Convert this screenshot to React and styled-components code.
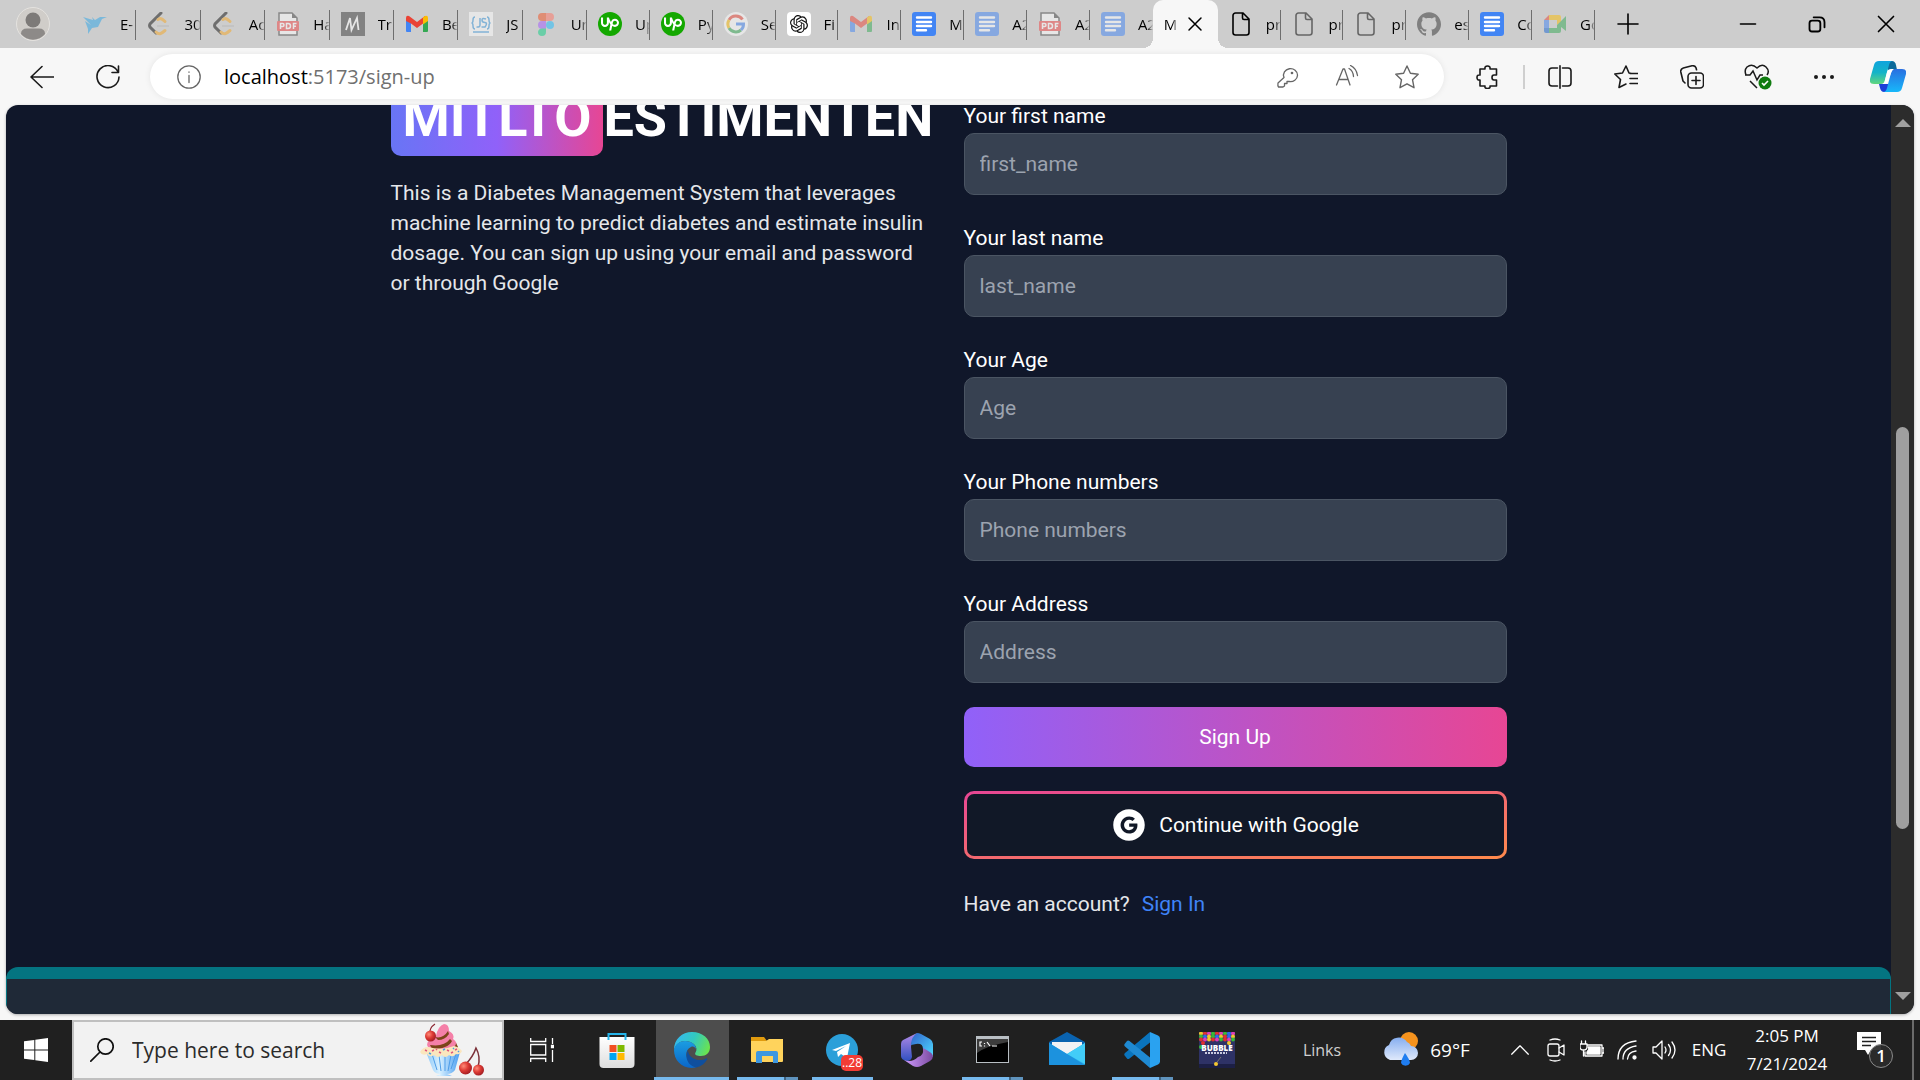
import React from "react";
import styled, { createGlobalStyle, css } from "styled-components";
import { AiFillGoogleCircle } from "react-icons/ai";
import { SiUpwork, SiOpenai, SiGithub } from "react-icons/si";

const uiFont = '"Segoe UI", "Open Sans", "Noto Sans", sans-serif';
const pageFont = 'Roboto, "Noto Sans", sans-serif';

const GlobalStyle = createGlobalStyle`
  *, *::before, *::after { box-sizing: border-box; }
  body { margin: 0; background: #f7f7f7; }
  button, input { font: inherit; color: inherit; border: 0; margin: 0; padding: 0; background: none; }
  h1, p { margin: 0; }
  svg { display: block; flex: none; }
`;

const Desktop = styled.div`
  height: 100vh;
  display: flex;
  flex-direction: column;
  overflow: hidden;
  font-family: ${uiFont};
  color: #000;
`;

/* ---------- tab strip ---------- */

const TabStrip = styled.header`
  display: flex;
  height: 48px;
  background: #cdcdcd;
`;

const Profile = styled.button`
  flex: none;
  width: 72px;
  padding: 0 0 0 16px;
`;

const TabGroup = styled.div`
  display: flex;
  flex: 0 1 ${(p) => p.$width}px;
  min-width: 0;
`;

const Tab = styled.button`
  position: relative;
  flex: 1 1 0;
  min-width: 0;
  height: 48px;
  display: flex;
  align-items: center;
  gap: 13px;
  padding-left: 11px;
  font-size: 15px;
  line-height: 24px;
  text-align: left;

  &::after {
    content: "";
    position: absolute;
    right: 0;
    top: 10px;
    width: ${(p) => (p.$last ? 0 : 1)}px;
    height: 30px;
    background: #6e6e6e;
  }

  svg { opacity: ${(p) => (p.$asleep ? 0.5 : 1)}; }
  svg svg { opacity: 1; }
`;

const TabTitle = styled.span`
  flex: 1;
  min-width: 0;
  overflow: hidden;
  white-space: nowrap;
  mask-image: linear-gradient(90deg, #000 60%, transparent);
`;

const ActiveTab = styled.div`
  position: relative;
  flex: 0 0 65px;
  display: flex;
  align-items: center;
  gap: 8px;
  padding: 0 14px 0 11px;
  font-size: 15px;
  line-height: 24px;
  background: #f7f7f7;
  border-radius: 10px 10px 0 0;

  &::before, &::after {
    content: "";
    position: absolute;
    bottom: 0;
    width: 10px;
    height: 10px;
  }
  &::before { left: -10px; background: radial-gradient(circle at 0 0, transparent 10px, #f7f7f7 10px); }
  &::after { right: -10px; background: radial-gradient(circle at 100% 0, transparent 10px, #f7f7f7 10px); }
`;

const IconButton = styled.button`
  flex: none;
  width: ${(p) => p.$width || 66}px;
  display: flex;
  align-items: center;
  justify-content: center;
`;

const WindowControls = styled.div`
  margin-left: auto;
  display: flex;
`;

/* ---------- toolbar ---------- */

const Toolbar = styled.nav`
  display: flex;
  align-items: stretch;
  height: 57px;
  padding: 6px 1px 6px 9px;
  background: #f7f7f7;
`;

const AddressBar = styled.div`
  flex: 1;
  display: flex;
  align-items: stretch;
  margin: 0 11px 0 9px;
  padding: 0 7px 0 9px;
  border-radius: 23px;
  background: #fff;
  box-shadow: 0 0 6px rgba(0, 0, 0, 0.08);
`;

const Url = styled.div`
  flex: 1;
  align-self: center;
  padding-left: 5px;
  font-size: 20px;
  line-height: 30px;
  color: #707070;
`;

const UrlHost = styled.span`
  color: #000;
`;

const ToolbarDivider = styled.span`
  align-self: center;
  width: 2px;
  height: 24px;
  margin: 0 2px;
  background: #cfcfcf;
`;

/* ---------- web page ---------- */

const Viewport = styled.div`
  flex: 1;
  min-height: 0;
  display: flex;
  margin: 0 6px 6px;
  border-radius: 12px;
  overflow: hidden;
  background: #10172a;
  box-shadow: 0 1px 3px rgba(0, 0, 0, 0.3);
`;

const Scroller = styled.div`
  flex: 1;
  min-width: 0;
  display: flex;
  flex-direction: column;
  margin-top: -26px;
  font-family: ${pageFont};
  font-size: 21px;
  line-height: 30px;
  color: #e5e7eb;
`;

const SignUpPage = styled.main`
  width: 100%;
  max-width: 1116px;
  margin: 0 auto;
  padding-bottom: 48px;
  display: grid;
  grid-template-columns: 1fr 1fr;
  gap: 30px;
`;

const Brand = styled.h1`
  display: flex;
  margin-bottom: 22px;
  font-size: 54px;
  line-height: 77px;
  font-weight: 700;
  color: #fff;
`;

const BrandBadge = styled.span`
  padding: 0 12px;
  border-radius: 10px;
  background: linear-gradient(90deg, #6875f5, #9061f9 50%, #e74694);
`;

const Tagline = styled.p`
  padding-right: 8px;
`;

const Form = styled.form`
  display: flex;
  flex-direction: column;
  gap: 24px;
  padding-top: 22px;
`;

const Fields = styled.div`
  display: flex;
  flex-direction: column;
  gap: 28px;
`;

const Field = styled.div`
  display: flex;
  flex-direction: column;
  gap: 2px;
`;

const Label = styled.label`
  color: #fff;
`;

const TextInput = styled.input`
  width: 100%;
  height: 62px;
  padding: 0 15px;
  border: 1px solid #4b5563;
  border-radius: 10px;
  background: #374151;
  color: #fff;

  &::placeholder { color: #9ca3af; opacity: 1; }
`;

const SubmitButton = styled.button`
  height: 60px;
  border-radius: 10px;
  background: linear-gradient(90deg, #9061f9, #e74694);
  color: #fff;
`;

const GoogleButton = styled.button`
  height: 68px;
  display: flex;
  align-items: center;
  justify-content: center;
  gap: 12px;
  border: 3px solid transparent;
  border-radius: 10px;
  background:
    linear-gradient(#111827, #111827) padding-box,
    linear-gradient(to bottom right, #e74694, #ff8a4c) border-box;
  color: #fff;
`;

const AccountPrompt = styled.p`
  display: flex;
  gap: 12px;
  margin-top: 6px;
`;

const SignInLink = styled.a`
  color: #3f83f8;
  text-decoration: none;
`;

const PageFooter = styled.footer`
  flex: 1;
  border: 1px solid #047481;
  border-top-width: 12px;
  border-bottom: 0;
  border-radius: 12px 12px 0 0;
  background: #1f2937;
`;

const ScrollTrack = styled.div`
  width: 23px;
  display: grid;
  grid-template-rows: 36px 286fr 402fr 149fr 36px;
  justify-items: center;
  align-items: center;
  background: #2c2c2c;
`;

const ScrollThumb = styled.div`
  grid-row: 3;
  width: 13px;
  height: 100%;
  border-radius: 7px;
  background: #9f9f9f;
`;

const ScrollArrow = styled.svg`
  grid-row: ${(p) => p.$row};
  fill: #a0a0a0;
`;

/* ---------- taskbar ---------- */

const Taskbar = styled.footer`
  display: flex;
  height: 60px;
  background: #202020;
  color: #fff;
`;

const SearchBox = styled.label`
  flex: 0 0 432px;
  display: flex;
  align-items: center;
  gap: 18px;
  padding: 0 16px;
  border: 2px solid #c0c0c0;
  background: #f2f2f2;
  color: #2b2b2b;
`;

const SearchInput = styled.input`
  flex: 1;
  min-width: 0;
  font-size: 21px;
  line-height: 30px;
  outline: 0;

  &::placeholder { color: #2b2b2b; opacity: 1; }
`;

const TaskButton = styled.button`
  position: relative;
  flex: 0 0 75px;
  display: flex;
  align-items: center;
  justify-content: center;

  ${(p) => p.$focused && css`
    background: linear-gradient(90deg, transparent 2px, #4d4d4d 2px);
    box-shadow: inset 0 -3px #76b9ed;
  `}

  ${(p) => p.$running && css`
    &::after {
      content: "";
      position: absolute;
      left: 8px;
      right: 6px;
      bottom: 0;
      height: 3px;
      background: ${p.$running === "stack"
        ? "linear-gradient(90deg, #76b9ed 47px, #3f6380 47px, #3f6380 49px, #5f93bd 49px)"
        : "#76b9ed"};
    }
  `}
`;

const CountBadge = styled.span`
  position: absolute;
  left: 37px;
  top: 35px;
  padding: 0 1px;
  border-radius: 5px;
  background: #f23c34;
  font-size: 12px;
  line-height: 16px;
`;

const Tray = styled.div`
  margin-left: auto;
  display: flex;
  font-size: 17px;
  line-height: 28px;
`;

const TrayButton = styled.button`
  display: flex;
  align-items: center;
  justify-content: center;
  gap: 12px;
  width: ${(p) => p.$width}px;
  white-space: nowrap;
`;

const ToolbarLabel = styled(TrayButton)`
  font-size: 16px;
  color: #d0d0d0;
`;

const Weather = styled(TrayButton)`
  font-size: 19px;
`;

const Clock = styled(TrayButton)`
  flex-direction: column;
  gap: 0;
`;

const Notifications = styled(TrayButton)`
  border-right: 2px solid #6b6b6b;
`;

const DesktopEdge = styled.span`
  width: 6px;
`;

/* ---------- favicons ---------- */

const Fav = ({ children, box = 24 }) => (
  <svg width="24" height="24" viewBox={`0 0 ${box} ${box}`} fill="none" aria-hidden="true">{children}</svg>
);

const Bird = () => (
  <Fav>
    <path d="M0 5l10 3-1-3 3 3 5-3h7l-5 2-4 8-6 1-4 6 0-5-3-8 6 4z" fill="#2ba5e8" />
  </Fav>
);
const LeetCode = () => (
  <Fav>
    <path d="M14 1L3 12a3 3 0 0 0 0 3l6 6" stroke="#111" strokeWidth="3" strokeLinecap="round" />
    <path d="M11 7.500l2-1c2 0 3 1 5 3M9 20c3 3 5 2 9-1.500" stroke="#f5a623" strokeWidth="3" strokeLinecap="round" />
    <path d="M10 14h12" stroke="#bbb" strokeWidth="2" />
  </Fav>
);
const Pdf = () => (
  <Fav>
    <path d="M3 1h13l5 5v17H3z" fill="#fff" stroke="#444" strokeWidth="1.500" />
    <path d="M16 1v5h5z" fill="#444" />
    <rect x="1" y="9" width="22" height="10" rx="1" fill="#f04444" />
    <path d="M4.500 17v-5.500h2q1.500 0 1.500 1.500t-1.500 1.500h-2M10.500 11.500h1.500q2.500 0 2.500 2.500t-2.500 2.500h-1.500zM17.500 17v-5.500h3M17.500 14.300h2.500" stroke="#fff" strokeWidth="1.500" />
  </Fav>
);
const Mui = () => (
  <Fav>
    <path d="M0 0h24v24H0z" fill="#3a3a3a" />
    <path d="M5 18L9 6l1.500 12L16 6l1.500 12" stroke="#fff" strokeWidth="1.800" />
  </Fav>
);
const Gmail = () => (
  <Fav>
    <path d="M1 6v13q0 1 1 1h4V10z" fill="#4285f4" />
    <path d="M23 6v13q0 1-1 1h-4V10z" fill="#34a853" />
    <path d="M1 9V6q0-3 3-2l8 6 8-6v6l-8 6-6-4.500z" fill="#ea4335" />
    <path d="M18 5.500l2-1.500q3-1 3 2v3l-5 3.500z" fill="#fbbc04" />
  </Fav>
);
const JsManager = () => (
  <Fav>
    <path d="M0 0h24v24H0z" fill="#fff" />
    <path d="M6 5Q4 5 4 8t-1.500 3Q4 11 4 14t2 3M18 5q2 0 2 3t1.500 3Q20 11 20 14t-2 3M11 6v7q0 2.500-3.500 2M17 7q-4-1.500-4 1t3 2.500 0 4.500h-3.500M4 20h16" stroke="#3b9be0" strokeWidth="1.500" />
  </Fav>
);
const Figma = () => (
  <Fav>
    <path d="M4 5a4 4 0 0 1 4-4h4v8H8a4 4 0 0 1-4-4z" fill="#f24e1e" />
    <path d="M12 1h4a4 4 0 0 1 0 8h-4z" fill="#ff7262" />
    <path d="M4 13a4 4 0 0 1 4-4h4v8H8a4 4 0 0 1-4-4z" fill="#a259ff" />
    <circle cx="16" cy="13" r="4" fill="#1abcfe" />
    <path d="M4 20a4 4 0 0 1 4-3.500h4V20a4 4 0 0 1-8 0z" fill="#0acf83" />
  </Fav>
);
const Upwork = () => (
  <Fav>
    <circle cx="12" cy="12" r="12" fill="#14a800" />
    <SiUpwork x="3" y="3" size={18} color="#fff" />
  </Fav>
);
const GoogleG = () => (
  <Fav>
    <circle cx="12" cy="12" r="12" fill="#fff" />
    <path d="M18.500 7.500A8 8 0 0 0 5 8" stroke="#ea4335" strokeWidth="3" />
    <path d="M5 8a8 8 0 0 0 0 8" stroke="#fbbc05" strokeWidth="3" />
    <path d="M5 16a8 8 0 0 0 12 2" stroke="#34a853" strokeWidth="3" />
    <path d="M17 18a8 8 0 0 0 2.500-6H12" stroke="#4285f4" strokeWidth="3" />
  </Fav>
);
const ChatGpt = () => (
  <Fav>
    <rect width="24" height="24" rx="4" fill="#fff" />
    <SiOpenai x="3" y="3" size={18} color="#111" />
  </Fav>
);
const Docs = () => (
  <Fav>
    <rect width="24" height="24" rx="3" fill="#4285f4" />
    <path d="M5 5.500h14M5 10h14M5 14h14M5 18.200h9" stroke="#fff" strokeWidth="2.400" strokeLinecap="round" />
  </Fav>
);
const FileIcon = () => (
  <Fav>
    <path d="M14 1H6.500A2.500 2.500 0 0 0 4 3.500v17A2.500 2.500 0 0 0 6.500 23h11a2.500 2.500 0 0 0 2.500-2.500V7zM13.500 1.500V6q0 1.500 1.500 1.500h5" stroke="#000" strokeWidth="1.600" />
  </Fav>
);
const GitHubMark = () => (
  <SiGithub size={24} color="#333" aria-hidden="true" />
);
const Meet = () => (
  <Fav>
    <path d="M1 8l5-5v5z" fill="#ea4335" />
    <path d="M6 3h10q2 0 2 2v5l-4 3V8H6z" fill="#fbbc04" />
    <path d="M1 8h5v8H1z" fill="#4285f4" />
    <path d="M1 16h5v5H3q-2 0-2-2z" fill="#1967d2" />
    <path d="M6 16h8v-3l9-9v15l-5-4v4q0 2-2 2H6z" fill="#34a853" />
  </Fav>
);

const firstTabs = [
  ["E-", Bird, true], ["30", LeetCode, true], ["Ac", LeetCode, true], ["Ha", Pdf, true],
  ["Tr", Mui, true], ["Be", Gmail, false], ["JS", JsManager, true], ["Un", Figma, true],
];
const middleTabs = [
  ["Up", Upwork, false], ["Py", Upwork, false], ["Se", GoogleG, true], ["Fi", ChatGpt, false],
  ["In", Gmail, true], ["M", Docs, false], ["A2", Docs, true], ["A2", Pdf, true], ["A2", Docs, true],
];
const lastTabs = [
  ["pr", FileIcon, false], ["pr", FileIcon, true], ["pr", FileIcon, true],
  ["es", GitHubMark, true], ["Co", Docs, false], ["Go", Meet, true],
];

const renderTabs = (tabs, hideLast) =>
  tabs.map(([title, Icon, asleep], i) => (
    <Tab key={i} type="button" $asleep={asleep} $last={hideLast && i === tabs.length - 1}>
      <Icon />
      <TabTitle>{title}</TabTitle>
    </Tab>
  ));

/* ---------- browser glyphs ---------- */

const Line = ({ size = 24, w = 1.6, color = "#1a1a1a", children }) => (
  <svg width={size} height={size} viewBox="0 0 24 24" fill="none" stroke={color} strokeWidth={w}
    strokeLinecap="round" strokeLinejoin="round" aria-hidden="true">{children}</svg>
);

const Avatar = () => (
  <svg width="34" height="34" viewBox="0 0 34 34" aria-hidden="true">
    <circle cx="17" cy="17" r="16.500" fill="#d0cdc9" stroke="#e4e2df" />
    <circle cx="17" cy="13" r="7.500" fill="#7d7a78" />
    <path d="M5 27q0-5.500 6-5.500h12q6 0 6 5.500a15.500 15.500 0 0 1-24 0z" fill="#8d8a88" />
  </svg>
);

const Copilot = () => (
  <svg width="36" height="34" viewBox="0 0 36 34" aria-hidden="true">
    <defs>
      <linearGradient id="cp1" x1="0" y1="0" x2="0" y2="1">
        <stop offset="0" stopColor="#0fa3dd" /><stop offset=".5" stopColor="#14b4c8" /><stop offset="1" stopColor="#62d67e" />
      </linearGradient>
      <linearGradient id="cp2" x1="0" y1="0" x2="0" y2="1">
        <stop offset="0" stopColor="#2a6fe0" /><stop offset="1" stopColor="#17b8fa" />
      </linearGradient>
    </defs>
    <path d="M9 24h10l-2 8h-3q-3 0-4-4z" fill="#1b3fd8" />
    <path d="M17 1h5q3 0 4 4l1 5h-9z" fill="#0c6a9a" />
    <path d="M9 1h14q-3 0-4 4l-4 15q-1 4-4 4H4q-5 0-4-5L4 5q1-4 5-4z" fill="url(#cp1)" />
    <path d="M27 32H13q3 0 4-4l4-15q1-4 4-4h7q5 0 4 5l-4 14q-1 4-5 4z" fill="url(#cp2)" />
    <path d="M17 12q1-3 4-3h3q-2 1-3 4l-3 8q-1 3-4 3h-1q2-1 2-4z" fill="#fff" />
  </svg>
);

/* ---------- taskbar glyphs ---------- */

const IceCream = () => (
  <svg width="66" height="54" viewBox="0 0 66 54" aria-hidden="true">
    <defs>
      <linearGradient id="cup" x1="0" x2="1">
        <stop offset="0" stopColor="#8cc8f8" /><stop offset=".4" stopColor="#d8f0ff" /><stop offset="1" stopColor="#4a9df0" />
      </linearGradient>
      <radialGradient id="cherry" cx=".35" cy=".35" r=".7">
        <stop offset="0" stopColor="#ff8b78" /><stop offset=".5" stopColor="#dd3b35" /><stop offset="1" stopColor="#a01c22" />
      </radialGradient>
    </defs>
    <path d="M8 24q-3-5 4-8l4-3q2-10 8-12 5 0 5 7 6 3 4 8 5 3 3 9l-14 4z" fill="#f580a8" />
    <path d="M10 22q14 2 20-6l2 2q-4 8-20 8zM15 14q8 2 13-6l1 3q-4 6-11 6zM30 26q6-2 6-6l2 4-3 4z" fill="#7b4418" />
    <path d="M6 29h34l-5 18q-3 4-8 4l5 2H16l5-2q-6 0-8-4z" fill="url(#cup)" />
    <path d="M12 31l5 16M19 32l2 16M25 32v16M31 32l-3 16M36 31l-5 15" stroke="#4e9de8" strokeWidth="1" fill="none" />
    <path d="M0 29q3-5 8-5 14 4 26-1 5 1 8 5-2 4-6 3-3 4-7 1-4 4-7 0-4 4-8 0-4 3-7-1-5 2-7-2z" fill="#fbe6bd" />
    <path d="M5 27l2 1M12 28l2-1M19 29l2 1M27 27l2 1M35 27l2-1M16 26l1 1M31 30l2-1" stroke="#e0567e" strokeWidth="1.500" />
    <path d="M9 30l2 1M23 27l2-1M33 25l1 1M38 28l1 1" stroke="#4a9de0" strokeWidth="1.500" />
    <path d="M10 11Q9 5 15 1" stroke="#8b2530" strokeWidth="1.200" fill="none" />
    <circle cx="10.500" cy="13" r="5.500" fill="url(#cherry)" />
    <path d="M45 42q8-8 11-17 5 9 2 19" stroke="#7b3038" strokeWidth="1.500" fill="none" />
    <circle cx="45.500" cy="45" r="6.500" fill="url(#cherry)" />
    <circle cx="58.500" cy="47" r="5.500" fill="url(#cherry)" />
  </svg>
);

const Store = () => (
  <svg width="36" height="36" viewBox="0 0 36 36" aria-hidden="true">
    <defs><linearGradient id="bag" x1="0" y1="0" x2="0" y2="1"><stop offset="0" stopColor="#fff" /><stop offset="1" stopColor="#dedede" /></linearGradient></defs>
    <path d="M9.500 8V2h17v6" fill="none" stroke="#25b4ea" strokeWidth="2" />
    <path d="M.500 5h35v27q0 4-4 4h-27q-4 0-4-4z" fill="url(#bag)" />
    <path d="M9.500 8V5M26.500 8V5" stroke="#25b4ea" strokeWidth="2" />
    <path d="M10.500 13h7v7h-7z" fill="#f25022" /><path d="M18.500 13h7v7h-7z" fill="#7fba00" />
    <path d="M10.500 21h7v7h-7z" fill="#00a4ef" /><path d="M18.500 21h7v7h-7z" fill="#ffb900" />
  </svg>
);

const Edge = () => (
  <svg width="36" height="36" viewBox="0 0 36 36" aria-hidden="true">
    <defs>
      <linearGradient id="e1" x1="0" y1=".3" x2="1" y2=".6"><stop offset="0" stopColor="#35b8f0" /><stop offset=".5" stopColor="#32c9c0" /><stop offset="1" stopColor="#6be34e" /></linearGradient>
      <linearGradient id="e2" x1="0" y1="0" x2="0" y2="1"><stop offset="0" stopColor="#1b9de2" /><stop offset="1" stopColor="#0a66c8" /></linearGradient>
    </defs>
    <path d="M0 18C0 7 8 0 18 0c11 0 18 7 18 15 0 6-4 9-9 9-4 0-7-1-5.500-3.500C25 15 19 9 11 9 6 9 2 12 0 18z" fill="url(#e1)" />
    <path d="M0 18C1 12 6 9 11 9c7 0 11 4 11 8-1-2-3-3-5-2-5 2-6 8-3 13 2 4 6 6 8 7.500C9 38 0 29 0 18z" fill="url(#e2)" />
    <path d="M14 18c-4 7 0 16 8 17.500 5-1 9-4 11-8 .5-1-.3-1.500-1-1-7 4-18 0-18-8.500z" fill="#0f4f9e" />
  </svg>
);

const Folder = () => (
  <svg width="36" height="36" viewBox="0 0 36 36" aria-hidden="true">
    <path d="M2 5h13l3 4H2z" fill="#e09b0e" />
    <path d="M2 9h15l3-2h14v22q0 1-1 1H3q-1 0-1-1z" fill="#ffd35c" />
    <path d="M7 31V21q0-2 2-2h18q2 0 2 2v10h-5v-7H13v7z" fill="#3e97e0" />
  </svg>
);

const Telegram = () => (
  <svg width="34" height="34" viewBox="0 0 34 34" aria-hidden="true">
    <circle cx="17" cy="17" r="16" fill="#2b9fd9" />
    <path d="M7 17l18-7-3 15-6-4-3 3-1-5 9-6-10 5z" fill="#fff" />
  </svg>
);

const Office = () => (
  <svg width="36" height="36" viewBox="0 0 36 36" aria-hidden="true">
    <defs>
      <linearGradient id="o1" x1="0" y1="0" x2="0" y2="1"><stop offset="0" stopColor="#b48be8" /><stop offset="1" stopColor="#3050c0" /></linearGradient>
      <linearGradient id="o2" x1="0" y1="0" x2="1" y2="1"><stop offset="0" stopColor="#2f62cc" /><stop offset="1" stopColor="#50dcff" /></linearGradient>
      <linearGradient id="o3"><stop offset="0" stopColor="#d19cff" /><stop offset="1" stopColor="#7a4aa0" /></linearGradient>
    </defs>
    <path d="M18 1L4 8q-2 1-2 4v12q0 4 6 5 4 0 5-4l-1-10q0-6 6-14z" fill="url(#o1)" />
    <path d="M18 1q-6 4-6 12l5-1q7-1 7 5l10 8V12q0-3-3-5L22 2q-2-1-4-1z" fill="url(#o2)" />
    <path d="M34 24q0-3-10-8 1 8-5 9-6 6-14 3l9 6q4 2 8 0l9-5q3-2 3-5z" fill="url(#o3)" />
  </svg>
);

const Terminal = () => (
  <svg width="36" height="36" viewBox="0 0 36 36" aria-hidden="true">
    <path d="M2 4h33v27H2z" fill="#b9bfc4" /><path d="M3 7h31v23H3z" fill="#000" />
    <path d="M3 7h31v3Q12 14 3 21z" fill="#3c3c3c" />
    <path d="M8 10H6v4h2M10.500 11v1M10.500 13.500v1M13 10l3 4M18 14h5" stroke="#fff" strokeWidth="1.200" fill="none" />
  </svg>
);

const Mail = () => (
  <svg width="36" height="36" viewBox="0 0 36 36" aria-hidden="true">
    <path d="M0 10L18 0l18 10v4H0z" fill="#0a63b0" />
    <path d="M3 10h30v8L18 25 3 18z" fill="#f2f2f4" />
    <path d="M0 11l18 11L36 11v21q0 1-1 1H1q-1 0-1-1z" fill="#2cb3ee" />
    <path d="M36 11v21L18 22z" fill="#42cdf8" /><path d="M0 11l36 22H1q-1 0-1-1z" fill="#1c92de" />
  </svg>
);

const VsCode = () => (
  <svg width="36" height="36" viewBox="0 0 36 36" aria-hidden="true">
    <path d="M26 0L1 21q-1.500 1.500 0 3l2 2.500q1 1 2.500 0L26 10.500z" fill="#0a74bd" />
    <path d="M26 36L1 14.500q-1.500-1.500 0-3L3 9q1-1 2.500 0L26 25.500z" fill="#1f8ad2" />
    <path d="M26 0l8 3.500q2 1 2 3v23q0 2-2 3L26 36z" fill="#2aa2f0" />
  </svg>
);

const ballColors = ["#f2c62c", "#dd3cb8", "#2c6be8", "#e03030", "#38b838"];
const BubbleShooter = () => (
  <svg width="36" height="36" viewBox="0 0 36 36" aria-hidden="true">
    <path d="M0 0h36v36H0z" fill="#2e3266" /><path d="M0 32h36v4H0z" fill="#1c1f45" />
    {Array.from({ length: 27 }, (_, i) => (
      <circle key={i} cx={2 + (i % 9) * 4} cy={1.5 + Math.floor(i / 9) * 3} r="2" fill={ballColors[(i * 3 + Math.floor(i / 4)) % 5]} />
    ))}
    <circle cx="4" cy="11" r="2" fill="#e03030" /><circle cx="2" cy="15" r="2" fill="#38b838" /><circle cx="30" cy="11" r="2" fill="#f2c62c" />
    <text x="18" y="19" textAnchor="middle" fontSize="8" fontWeight="800" fill="#fff">BUBBLE</text>
    <path d="M6 21h22" stroke="#c9cbe0" strokeWidth="2" strokeDasharray="2 1" />
    <path d="M18 30l4-5" stroke="#777" /><circle cx="17" cy="32" r="2" fill="#f5c832" />
  </svg>
);

const WeatherIcon = () => (
  <svg width="36" height="36" viewBox="0 0 36 36" aria-hidden="true">
    <defs><linearGradient id="cl" x1="0" y1="0" x2="0" y2="1"><stop offset="0" stopColor="#86aef0" /><stop offset="1" stopColor="#dfe9fb" /></linearGradient></defs>
    <circle cx="27" cy="9" r="9" fill="#f5931e" />
    <path d="M8 28a8 8 0 0 1-1-15A10 10 0 0 1 25 10a8 8 0 0 1 4 4 7 7 0 0 1 0 14z" fill="url(#cl)" />
    <path d="M23 21q5 7 5 10a5 5 0 0 1-9 0q0-3 4-10z" fill="#1f7df0" />
  </svg>
);

const formFields = [
  ["first_name", "Your first name", "first_name", "text"],
  ["last_name", "Your last name", "last_name", "text"],
  ["age", "Your Age", "Age", "text"],
  ["phone", "Your Phone numbers", "Phone numbers", "tel"],
  ["address", "Your Address", "Address", "text"],
];

export default function App() {
  return (
    <Desktop>
      <GlobalStyle />
      <TabStrip>
        <Profile type="button" aria-label="Profile"><Avatar /></Profile>
        <TabGroup $width={515}>{renderTabs(firstTabs)}</TabGroup>
        <TabGroup $width={1008}>
          {renderTabs(middleTabs, true)}
          <ActiveTab>
            <TabTitle>M</TabTitle>
            <IconButton type="button" $width={18} aria-label="Close tab">
              <Line size={18} w={2} color="#000"><path d="M4 4l16 16M20 4L4 20" /></Line>
            </IconButton>
          </ActiveTab>
          {renderTabs(lastTabs)}
        </TabGroup>
        <IconButton type="button" aria-label="New tab">
          <Line color="#000"><path d="M12 2v20M2 12h20" /></Line>
        </IconButton>
        <WindowControls>
          <IconButton type="button" $width={69} aria-label="Minimize">
            <Line size={20} w={2} color="#000"><path d="M3 12h18" /></Line>
          </IconButton>
          <IconButton type="button" $width={69} aria-label="Restore">
            <Line size={20} w={2.2} color="#000"><rect x="3" y="8" width="13" height="13" rx="3" /><path d="M8 4h7q6 0 6 6v6" /></Line>
          </IconButton>
          <IconButton type="button" $width={69} aria-label="Close window">
            <Line size={20} w={2} color="#000"><path d="M3 3l18 18M21 3L3 21" /></Line>
          </IconButton>
        </WindowControls>
      </TabStrip>

      <Toolbar>
        <IconButton type="button" aria-label="Back"><Line><path d="M23.500 12H1M12 1.500L1 12l11 10.500" /></Line></IconButton>
        <IconButton type="button" aria-label="Refresh">
          <Line><path d="M22 7A11 11 0 1 0 23 12M22.500 1v6.500H16" /></Line>
        </IconButton>
        <AddressBar>
          <IconButton type="button" $width={60} aria-label="Site information">
            <Line color="#666" w={1.3}><circle cx="12" cy="12" r="11.200" /><path d="M12 10.500v7M12 7v.3" /></Line>
          </IconButton>
          <Url><UrlHost>localhost</UrlHost>:5173/sign-up</Url>
          <IconButton type="button" $width={60} aria-label="Saved passwords">
            <Line color="#666" w={1.3}><path d="M9 12.500a7 6.500 0 1 1 5 4l-2 0v2H9.500v2.500l-1.500 1H3.500q-1-1-.5-4z" /><circle cx="17" cy="8" r=".7" /></Line>
          </IconButton>
          <IconButton type="button" $width={60} aria-label="Read aloud">
            <Line color="#666" w={1.3}><path d="M1.500 20L8 4h1.500L15 20M4 14.500h9M14 3.500q4 2 4.500 8M15.500 0.500q6 3 7 10" /></Line>
          </IconButton>
          <IconButton type="button" $width={60} aria-label="Add to favorites">
            <Line color="#666" w={1.4}><path d="M12 1l3.400 7.200 7.800 1-5.700 5.500 1.500 8L12 18.800 5 22.700l1.500-8L.8 9.200l7.800-1z" /></Line>
          </IconButton>
        </AddressBar>
        <IconButton type="button" aria-label="Extensions">
          <Line><path d="M4 4h5q-.5-3 2.500-3T14 4h6.500v6H18q-2 0-2 2.500t2 2.500h2.500v6H14q.5 2.500-2.500 2.500T9 21H4v-6q-3 .5-3-2.500T4 10z" /></Line>
        </IconButton>
        <ToolbarDivider />
        <IconButton type="button" aria-label="Split screen">
          <Line><path d="M9.500 3H4Q1 3 1 6v12q0 3 3 3h5.500M14.500 3H20q3 0 3 3v12q0 3-3 3h-5.500M12 .8v22.400" /></Line>
        </IconButton>
        <IconButton type="button" aria-label="Favorites">
          <Line><path d="M17.500 8.500L15 8l-3-7-3.500 7L.8 9l5.700 5.500L5 22.500l7-3.500M16 8.500h7.500M16 13.500h7.500M16 18.500h7.500" /></Line>
        </IconButton>
        <IconButton type="button" aria-label="Collections">
          <Line><rect x="8" y="8" width="15.500" height="15" rx="3.500" /><path d="M16 11.500v8M12 15.500h8M5 18l-2-2L.8 7q-.5-3 2.500-4L12 .8q3-.5 4 2l.5 2" /></Line>
        </IconButton>
        <IconButton type="button" aria-label="Browser essentials">
          <svg width="28" height="26" viewBox="0 0 28 26" fill="none" aria-hidden="true">
            <path d="M2 11Q0 6 3 3q5-4 10 1 5-5 9-1 4 4 1 8M1 11h5l3-4 4 9 3-5h3M6 17l7 7" stroke="#1a1a1a" strokeWidth="1.500" />
            <circle cx="21" cy="19" r="6.500" fill="#107c10" /><path d="M18 19l2 2 4-4" stroke="#fff" strokeWidth="1.600" />
          </svg>
        </IconButton>
        <IconButton type="button" aria-label="Settings and more">
          <Line w={0}><g fill="#1a1a1a"><circle cx="4" cy="12" r="2" /><circle cx="12" cy="12" r="2" /><circle cx="20" cy="12" r="2" /></g></Line>
        </IconButton>
        <IconButton type="button" $width={62} aria-label="Copilot"><Copilot /></IconButton>
      </Toolbar>

      <Viewport>
        <Scroller>
          <SignUpPage>
            <section>
              <Brand><BrandBadge>MITLTO</BrandBadge>ESTIMENTEN</Brand>
              <Tagline>
                This is a Diabetes Management System that leverages machine learning to predict
                diabetes and estimate insulin dosage. You can sign up using your email and password
                or through Google
              </Tagline>
            </section>
            <Form onSubmit={(e) => e.preventDefault()}>
              <Fields>
                {formFields.map(([id, label, placeholder, type]) => (
                  <Field key={id}>
                    <Label htmlFor={id}>{label}</Label>
                    <TextInput id={id} type={type} placeholder={placeholder} />
                  </Field>
                ))}
              </Fields>
              <SubmitButton type="submit">Sign Up</SubmitButton>
              <GoogleButton type="button">
                <AiFillGoogleCircle size={36} />
                Continue with Google
              </GoogleButton>
              <AccountPrompt>
                Have an account? <SignInLink href="/sign-in">Sign In</SignInLink>
              </AccountPrompt>
            </Form>
          </SignUpPage>
          <PageFooter />
        </Scroller>
        <ScrollTrack>
          <ScrollArrow $row={1} width="16" height="8" viewBox="0 0 16 8"><path d="M0 8l8-8 8 8z" /></ScrollArrow>
          <ScrollThumb />
          <ScrollArrow $row={5} width="16" height="8" viewBox="0 0 16 8"><path d="M0 0h16L8 8z" /></ScrollArrow>
        </ScrollTrack>
      </Viewport>

      <Taskbar>
        <IconButton type="button" $width={72} aria-label="Start">
          <svg width="24" height="24" viewBox="0 0 24 24" fill="#fff">
            <path d="M0 3.300L10.300 2v9.500H0zM11.300 1.800L24 0v11.500H11.300zM0 12.500h10.300V22L0 20.700zM11.300 12.500H24V24l-12.700-1.800z" />
          </svg>
        </IconButton>
        <SearchBox>
          <Line color="#111" w={1.7}><circle cx="15.500" cy="8.500" r="7.700" /><path d="M10 14L.8 23.200" /></Line>
          <SearchInput type="text" placeholder="Type here to search" />
          <IceCream />
        </SearchBox>
        <TaskButton type="button" aria-label="Task view">
          <svg width="24" height="24" viewBox="0 0 24 24" fill="none" stroke="#fff" strokeWidth="1.300">
            <path d="M.7 0v3.500h15V0M.7 6.500h15v10.500h-15zM.7 24v-3.500h15V24M22.500 0v6M22.500 12v12" />
            <path d="M21.500 7.500h2v2h-2z" fill="#fff" />
          </svg>
        </TaskButton>
        <TaskButton type="button" aria-label="Microsoft Store"><Store /></TaskButton>
        <TaskButton type="button" aria-label="Edge" $focused><Edge /></TaskButton>
        <TaskButton type="button" aria-label="File Explorer" $running="stack"><Folder /></TaskButton>
        <TaskButton type="button" aria-label="Telegram" $running="single"><Telegram /><CountBadge>..28</CountBadge></TaskButton>
        <TaskButton type="button" aria-label="Microsoft 365"><Office /></TaskButton>
        <TaskButton type="button" aria-label="Command Prompt" $running="stack"><Terminal /></TaskButton>
        <TaskButton type="button" aria-label="Mail"><Mail /></TaskButton>
        <TaskButton type="button" aria-label="Visual Studio Code" $running="stack"><VsCode /></TaskButton>
        <TaskButton type="button" aria-label="Bubble Shooter"><BubbleShooter /></TaskButton>

        <Tray>
          <ToolbarLabel type="button" $width={56}>Links</ToolbarLabel>
          <Weather type="button" $width={152}><WeatherIcon />69°F</Weather>
          <TrayButton type="button" $width={36} aria-label="Show hidden icons">
            <Line size={20} color="#fff" w={1.6}><path d="M2 17L12 7l10 10" /></Line>
          </TrayButton>
          <TrayButton type="button" $width={36} aria-label="Meet Now">
            <Line color="#fff" w={1.3}><rect x="4" y="6" width="11" height="12" rx="2" /><path d="M15 10l5-3v10l-5-3M6 2q5-2 10 0M6 22q5 2 10 0" /></Line>
          </TrayButton>
          <TrayButton type="button" $width={36} aria-label="Battery">
            <Line color="#fff" w={1.3}><path d="M7 7h15v11H5v-4M22 10h2v5h-2M1.500 3v3M5.500 3v3M0 6h7v3q0 3-3.500 3T0 9zM3.500 12v6" /><path d="M8 9h12v7H7v-2l2-3z" fill="#fff" /></Line>
          </TrayButton>
          <TrayButton type="button" $width={36} aria-label="Wi-Fi">
            <Line color="#fff" w={1.3}><path d="M2 21Q2 5 20 3M7 21Q7 10 20 8M11.500 21Q12 14 20 13" /><circle cx="18.500" cy="19.500" r="1.500" fill="#fff" /></Line>
          </TrayButton>
          <TrayButton type="button" $width={36} aria-label="Volume">
            <Line color="#fff" w={1.3}><path d="M1 9h3l6-6v18l-6-6H1zM13 9q2 3 0 6M16.500 6.500q4 5.500 0 11M20 4q6 8 0 16" /></Line>
          </TrayButton>
          <TrayButton type="button" $width={54}>ENG</TrayButton>
          <Clock type="button" $width={102}><span>2:05 PM</span><span>7/21/2024</span></Clock>
          <Notifications type="button" $width={76} aria-label="1 new notification">
            <svg width="36" height="36" viewBox="0 0 36 36" aria-hidden="true">
              <path d="M0 0h24v18H14l-3 5-3-5H0z" fill="#fff" />
              <path d="M5 5.500h14M5 9.500h14M5 13.500h9" stroke="#202020" strokeWidth="1.300" />
              <circle cx="24" cy="24" r="11.500" fill="#2b2b2b" fillOpacity=".93" stroke="#8a8a8a" />
              <text x="24" y="30" textAnchor="middle" fontSize="17" fontWeight="600" fill="#fff">1</text>
            </svg>
          </Notifications>
          <DesktopEdge />
        </Tray>
      </Taskbar>
    </Desktop>
  );
}
